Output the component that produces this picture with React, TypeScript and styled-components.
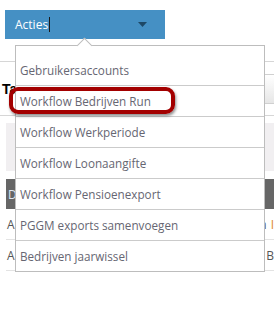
import styled, { createGlobalStyle } from 'styled-components';

const GlobalStyle = createGlobalStyle`
    body {
        margin: 0;
        background: #fff;
        font-family: 'Open Sans', 'Liberation Sans', sans-serif;
    }
`
const Page = styled.div`
    position: relative;
    width: 274px;
    height: 310px;
    overflow: hidden;
`
const Toolbar = styled.div`
    height: 51px;
    padding: 10px 0 0 5px;
    border-bottom: 1px solid #d6d6d6;
`
const DropButton = styled.div`
    width: 160px;
    height: 29px;
    box-sizing: border-box;
    padding: 0 18px 0 10px;
    display: flex;
    align-items: center;
    justify-content: space-between;
    background: #4590c4;
    color: #fff;
    font-size: 12px;
`
const Label = styled.span`
    display: flex;
    align-items: center;
`
const Cursor = styled.span`
    width: 1px;
    height: 15px;
    margin-left: 1px;
    background: #1a1a1a;
`
const TitleRow = styled.div`
    height: 53px;
    display: flex;
    align-items: center;
    border-bottom: 1px solid #d6d6d6;
`
const Heading = styled.h2`
    margin: 0 0 0 2px;
    font-family: 'Liberation Sans', Arial, sans-serif;
    font-size: 14px;
    font-weight: bold;
    color: #000;
`
const GhostButton = styled.div`
    margin-left: auto;
    margin-right: -20px;
    width: 60px;
    height: 28px;
    border: 1px solid #d0d0d0;
    background: linear-gradient(#ffffff, #e6e6e6);
`
const Band = styled.div`
    margin: 7px 0 0 6px;
    height: 48px;
    background: #f1eff1;
`
const Table = styled.div`
    margin: 8px 0 0 6px;
`
const HeadRow = styled.div`
    height: 30px;
    display: flex;
    align-items: center;
    padding-left: 2px;
    background: #666;
    color: #dfe8f4;
    font-size: 12px;
`
const Row = styled.div`
    height: 30px;
    display: flex;
    align-items: center;
    border-bottom: 1px solid #e3e3e3;
    color: #555;
    font-size: 12px;
`
const Cell = styled.span<{ width?: number; accent?: boolean }>`
    width: ${props => props.width ? props.width + 'px' : 'auto'};
    padding-left: 1px;
    white-space: nowrap;
    color: ${props => props.accent ? '#e08a2c' : 'inherit'};
`
const Menu = styled.ul`
    position: absolute;
    left: 15px;
    top: 45px;
    width: 248px;
    margin: 0;
    padding: 9px 0 0;
    list-style: none;
    background: #fff;
    border: 1px solid #bdbdbd;
    &::before {
        content: '';
        position: absolute;
        left: 63px;
        top: -6px;
        width: 10px;
        height: 10px;
        background: #fff;
        border-left: 1px solid #bdbdbd;
        border-top: 1px solid #bdbdbd;
        transform: rotate(45deg);
    }
`
const Item = styled.li`
    position: relative;
    height: 30px;
    display: flex;
    align-items: center;
    padding-left: 4px;
    border-bottom: 1px solid #cbcbcb;
    color: #666672;
    font-size: 11.7px;
    &:last-child {
        border-bottom: none;
    }
`
const Highlight = styled.span`
    position: absolute;
    left: -7px;
    top: 1px;
    width: 166px;
    height: 27px;
    box-sizing: border-box;
    border: 4px solid #a30000;
    border-radius: 9px;
    box-shadow: 1px 2px 3px rgba(0, 0, 0, 0.45);
`

const items = [
    'Gebruikersaccounts',
    'Workflow Bedrijven Run',
    'Workflow Werkperiode',
    'Workflow Loonaangifte',
    'Workflow Pensioenexport',
    'PGGM exports samenvoegen',
    'Bedrijven jaarwissel',
]

function Caret() {
    return (
        <svg width="9" height="5" viewBox="0 0 9 5">
            <path d="M0 0H9L4.5 5Z" fill="#1d4866" />
        </svg>
    )
}

function App() {
    return (
        <Page>
            <GlobalStyle />
            <Toolbar>
                <DropButton>
                    <Label>Acties<Cursor /></Label>
                    <Caret />
                </DropButton>
            </Toolbar>
            <TitleRow>
                <Heading>Ta</Heading>
                <GhostButton />
            </TitleRow>
            <Band />
            <Table>
                <HeadRow>D</HeadRow>
                <Row>
                    <Cell width={259}>A</Cell>
                    <Cell>n <Cell accent>I</Cell></Cell>
                </Row>
                <Row>
                    <Cell width={259}>A</Cell>
                    <Cell>B</Cell>
                </Row>
            </Table>
            <Menu>
                {
                    items.map((item, i) => (
                        <Item key={item}>
                            {item}
                            {i === 1 && <Highlight />}
                        </Item>
                    ))
                }
            </Menu>
        </Page>
    )
}

export default App;
